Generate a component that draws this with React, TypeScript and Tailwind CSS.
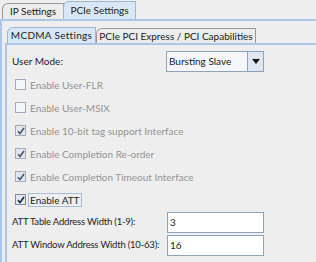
import React from "react";

const font = { fontFamily: 'Lato, "Noto Sans", sans-serif' };

function Check({ checked, disabled }: { checked?: boolean; disabled?: boolean }) {
  return (
    <span
      className={`flex h-[11px] w-[11px] shrink-0 items-center justify-center border ${
        disabled ? "border-[#a3abb8]" : "border-[#7e8aa0]"
      } ${checked ? "bg-[#dfe6f0]" : "bg-[#f4f5f7]"}`}
    >
      {checked && (
        <svg width="8" height="8" viewBox="0 0 8 8">
          <path d="M1 4.2 L3 6.5 L7 1" fill="none" stroke={disabled ? "#4d5560" : "#1e2530"} strokeWidth="1.6" />
        </svg>
      )}
    </span>
  );
}

function Row({ label, checked, disabled, focus }: { label: string; checked?: boolean; disabled?: boolean; focus?: boolean }) {
  return (
    <div className="flex h-[23px] items-center gap-[2px] pl-[8px]">
      <Check checked={checked} disabled={disabled} />
      <span
        className={`whitespace-nowrap px-[1px] leading-[12px] ${disabled ? "text-[#939393]" : "text-[#222]"} ${
          focus ? "border border-[#a8bcd8]" : "border border-transparent"
        }`}
      >
        {label}
      </span>
    </div>
  );
}

function Field({ value }: { value: string }) {
  return (
    <div className="flex h-[21px] w-[97px] shrink-0 items-center border border-[#8ea3b8] bg-white pl-[2px] text-[#222]">
      {value}
    </div>
  );
}

export default function App() {
  return (
    <div className="flex h-[262px] w-[316px] flex-col overflow-hidden whitespace-nowrap bg-[#eeeeee] text-[10px]" style={font}>
      <div className="flex h-[19px] items-end pl-[2px]">
        <div className="flex h-[16px] w-[62px] items-center justify-center rounded-tl-[6px] border border-b-0 border-[#9a9a9a] bg-[#ececec] text-[#222]">
          IP Settings
        </div>
        <div className="-ml-[1px] flex h-[18px] w-[73px] items-center justify-center rounded-tl-[6px] border border-b-0 border-[#9db6d8] bg-[#d9e6f5] text-[#222]">
          PCIe Settings
        </div>
      </div>
      <div className="flex flex-1 flex-col border-l-2 border-t-2 border-[#aec6e6] pl-[3px] pt-[6px]">
        <div className="flex h-[16px] items-end pl-[2px]">
          <div className="flex h-[16px] w-[89px] items-center justify-center rounded-tl-[6px] border border-b-0 border-[#9db6d8] bg-[#d9e6f5] tracking-[0.3px] text-[#222]">
            MCDMA Settings
          </div>
          <div className="flex h-[15px] w-[160px] items-center justify-center rounded-tl-[6px] border border-b-0 border-[#9a9a9a] bg-[#ececec] text-[#222]">
            PCIe PCI Express / PCI Capabilities
          </div>
        </div>
        <div className="flex flex-1 flex-col border-l-2 border-t-2 border-[#aec6e6] pt-[5px]">
          <div className="flex h-[22px] items-center justify-between pl-[5px] pr-[52px]">
            <span className="text-[#222]">User Mode:</span>
            <div className="flex h-[21px] w-[98px] border border-[#8ea3b8] bg-[#f4f6f9]">
              <span className="flex flex-1 items-center pl-[2px] text-[#222]">Bursting Slave</span>
              <span className="flex w-[16px] items-center justify-center border-l border-[#8ea3b8] bg-[#dfe6ef]">
                <svg width="8" height="5" viewBox="0 0 8 5">
                  <path d="M0 0 H8 L4 5 Z" fill="#111" />
                </svg>
              </span>
            </div>
          </div>
          <div className="mt-[1px] flex flex-col">
            <Row label="Enable User-FLR" disabled />
            <Row label="Enable User-MSIX" disabled />
            <Row label="Enable 10-bit tag support Interface" checked disabled />
            <Row label="Enable Completion Re-order" checked disabled />
            <Row label="Enable Completion Timeout Interface" checked disabled />
            <Row label="Enable ATT" checked focus />
          </div>
          <div className="flex h-[23px] items-center justify-between pl-[5px] pr-[52px]">
            <span className="text-[9.5px] tracking-[-0.2px] text-[#222]">ATT Table Address Width (1-9):</span>
            <Field value="3" />
          </div>
          <div className="flex h-[23px] items-center justify-between pl-[5px] pr-[52px]">
            <span className="text-[9.5px] tracking-[-0.2px] text-[#222]">ATT Window Address Width (10-63):</span>
            <Field value="16" />
          </div>
        </div>
      </div>
    </div>
  );
}
